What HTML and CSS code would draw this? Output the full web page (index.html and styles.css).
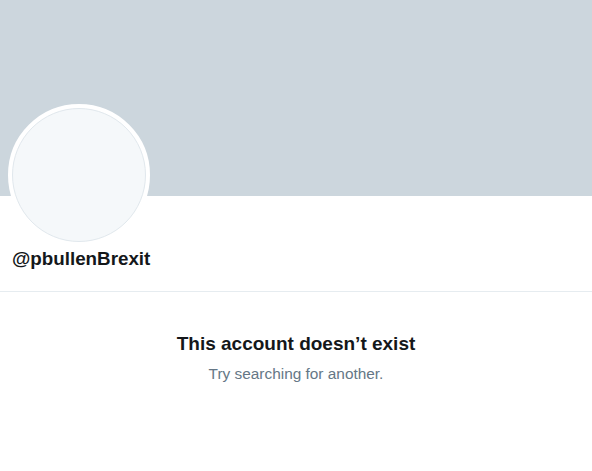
FILE: index.html
```html
<!DOCTYPE html>
<html>
<head>
<meta charset="utf-8">
<link rel="stylesheet" href="styles.css">
</head>
<body>
<div class="page">
  <div class="banner"></div>
  <div class="profile">
    <div class="avatar-row">
      <div class="avatar"><div class="avatar-inner"></div></div>
    </div>
    <div class="handle">@pbullenBrexit</div>
  </div>
  <div class="empty">
    <div class="title">This account doesn’t exist</div>
    <div class="sub">Try searching for another.</div>
  </div>
</div>
</body>
</html>
```
FILE: styles.css
```css
html, body { margin: 0; padding: 0; background: #fff; }
body { font-family: "Liberation Sans", Arial, sans-serif; }
.page { width: 592px; }
.banner { height: 196px; background: #ccd6dd; }
.profile {
  display: flow-root;
  box-sizing: border-box;
  height: 96px;
  padding: 0 12px 0 8px;
  border-bottom: 1px solid #e6ecf0;
}
.avatar-row { display: flow-root; height: 50px; }
.avatar {
  width: 134px; height: 134px; border-radius: 50%;
  border: 4px solid #fff; background: #fff;
  margin-top: -92px;
}
.avatar-inner {
  box-sizing: border-box;
  width: 134px; height: 134px; border-radius: 50%;
  background: #f5f8fa; border: 1px solid #e1e8ed;
}
.handle { font-weight: 700; font-size: 18.8px; line-height: 22px; color: #14171a; padding-left: 4px; margin-top: 2px; }
.empty { text-align: center; padding-top: 40px; }
.title { font-weight: 700; font-size: 19px; color: #14171a; line-height: 24px; }
.sub { font-size: 15.4px; color: #657786; margin-top: 8px; line-height: 20px; }
```
